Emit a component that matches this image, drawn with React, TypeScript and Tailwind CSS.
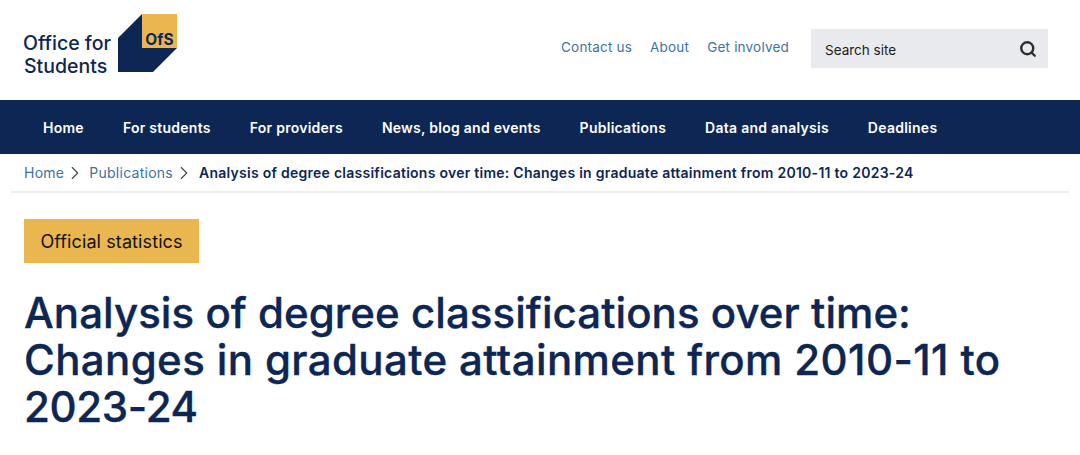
import { ChevronRight, Search } from "lucide-react";

const navItems = ["Home", "For students", "For providers", "News, blog and events", "Publications", "Data and analysis", "Deadlines"];
const topLinks = ["Contact us", "About", "Get involved"];

function Logo() {
  return (
    <div className="flex items-start">
      <div className="mt-[32px] ml-[23px] w-[95px] text-[19.5px] leading-[23px] font-medium text-[#0d2653]">
        <div>Office for</div>
        <div className="pl-[1px]">Students</div>
      </div>
      <div className="relative mt-[14px] h-[58px] w-[59px]">
        <svg width="59" height="58" viewBox="0 0 59 58" className="block">
          <polygon points="0,24 24,0 24,34 59,34 35,58 0,58" fill="#0d2653" />
          <rect x="24" y="0" width="35" height="34" fill="#e9b64f" />
        </svg>
        <span className="absolute top-[16px] left-[25px] w-[33px] text-center text-[15.5px] leading-[19px] font-bold text-[#0d2653]">OfS</span>
      </div>
    </div>
  );
}

export default function App() {
  return (
    <div className="h-[455px] w-[1080px] overflow-hidden bg-white font-['Inter',sans-serif]">
      <header className="flex h-[100px] items-start justify-between pr-[32px]">
        <Logo />
        <div className="mt-[29px] flex items-start">
          <nav className="mt-[9px] flex gap-[18px] text-[13.5px] leading-[18px] tracking-[0.2px] text-[#3f729f]">
            {topLinks.map((link) => (
              <a key={link}>{link}</a>
            ))}
          </nav>
          <div className="ml-[22px] flex h-[39px] w-[237px] items-center justify-between bg-[#e9eaee] pr-[11px] pl-[14px]">
            <span className="mt-[4px] text-[13.5px] text-[#1c1c1c]">Search site</span>
            <Search size={18} strokeWidth={3.2} className="text-[#2d2d2d]" />
          </div>
        </div>
      </header>

      <nav className="flex h-[54px] items-center gap-[39px] bg-[#0d2653] pl-[43px] text-[14px] font-semibold tracking-[0.26px] text-white">
        {navItems.map((item) => (
          <a key={item}>{item}</a>
        ))}
      </nav>

      <div className="mx-[11px] flex h-[39px] items-center border-b-2 border-[#eceded] pl-[13px] text-[14px] tracking-[0.26px]">
        <a className="text-[#3f729f]">Home</a>
        <ChevronRight size={22} strokeWidth={1.2} className="mr-[3px] text-[#444]" />
        <a className="text-[#3f729f]">Publications</a>
        <ChevronRight size={22} strokeWidth={1.2} className="mr-[4px] text-[#444]" />
        <span className="font-semibold text-[#0d2653]">Analysis of degree classifications over time: Changes in graduate attainment from 2010-11 to 2023-24</span>
      </div>

      <main className="px-[24px] pt-[26px]">
        <div className="flex h-[44px] w-[175px] items-center justify-center bg-[#e9b64f] text-[18px] tracking-[0.1px] text-[#111]">Official statistics</div>
        <h1 className="mt-[26px] w-[1010px] text-[42px] leading-[47px] font-medium text-[#0d2653] [-webkit-text-stroke:0.35px_#0d2653]">
          <span className="block tracking-[0.05px]">Analysis of degree classifications over time:</span>
          <span className="block tracking-[0.38px]">Changes in graduate attainment from 2010-11 to</span>
          <span className="block tracking-[-0.35px]">2023-24</span>
        </h1>
      </main>
    </div>
  );
}
